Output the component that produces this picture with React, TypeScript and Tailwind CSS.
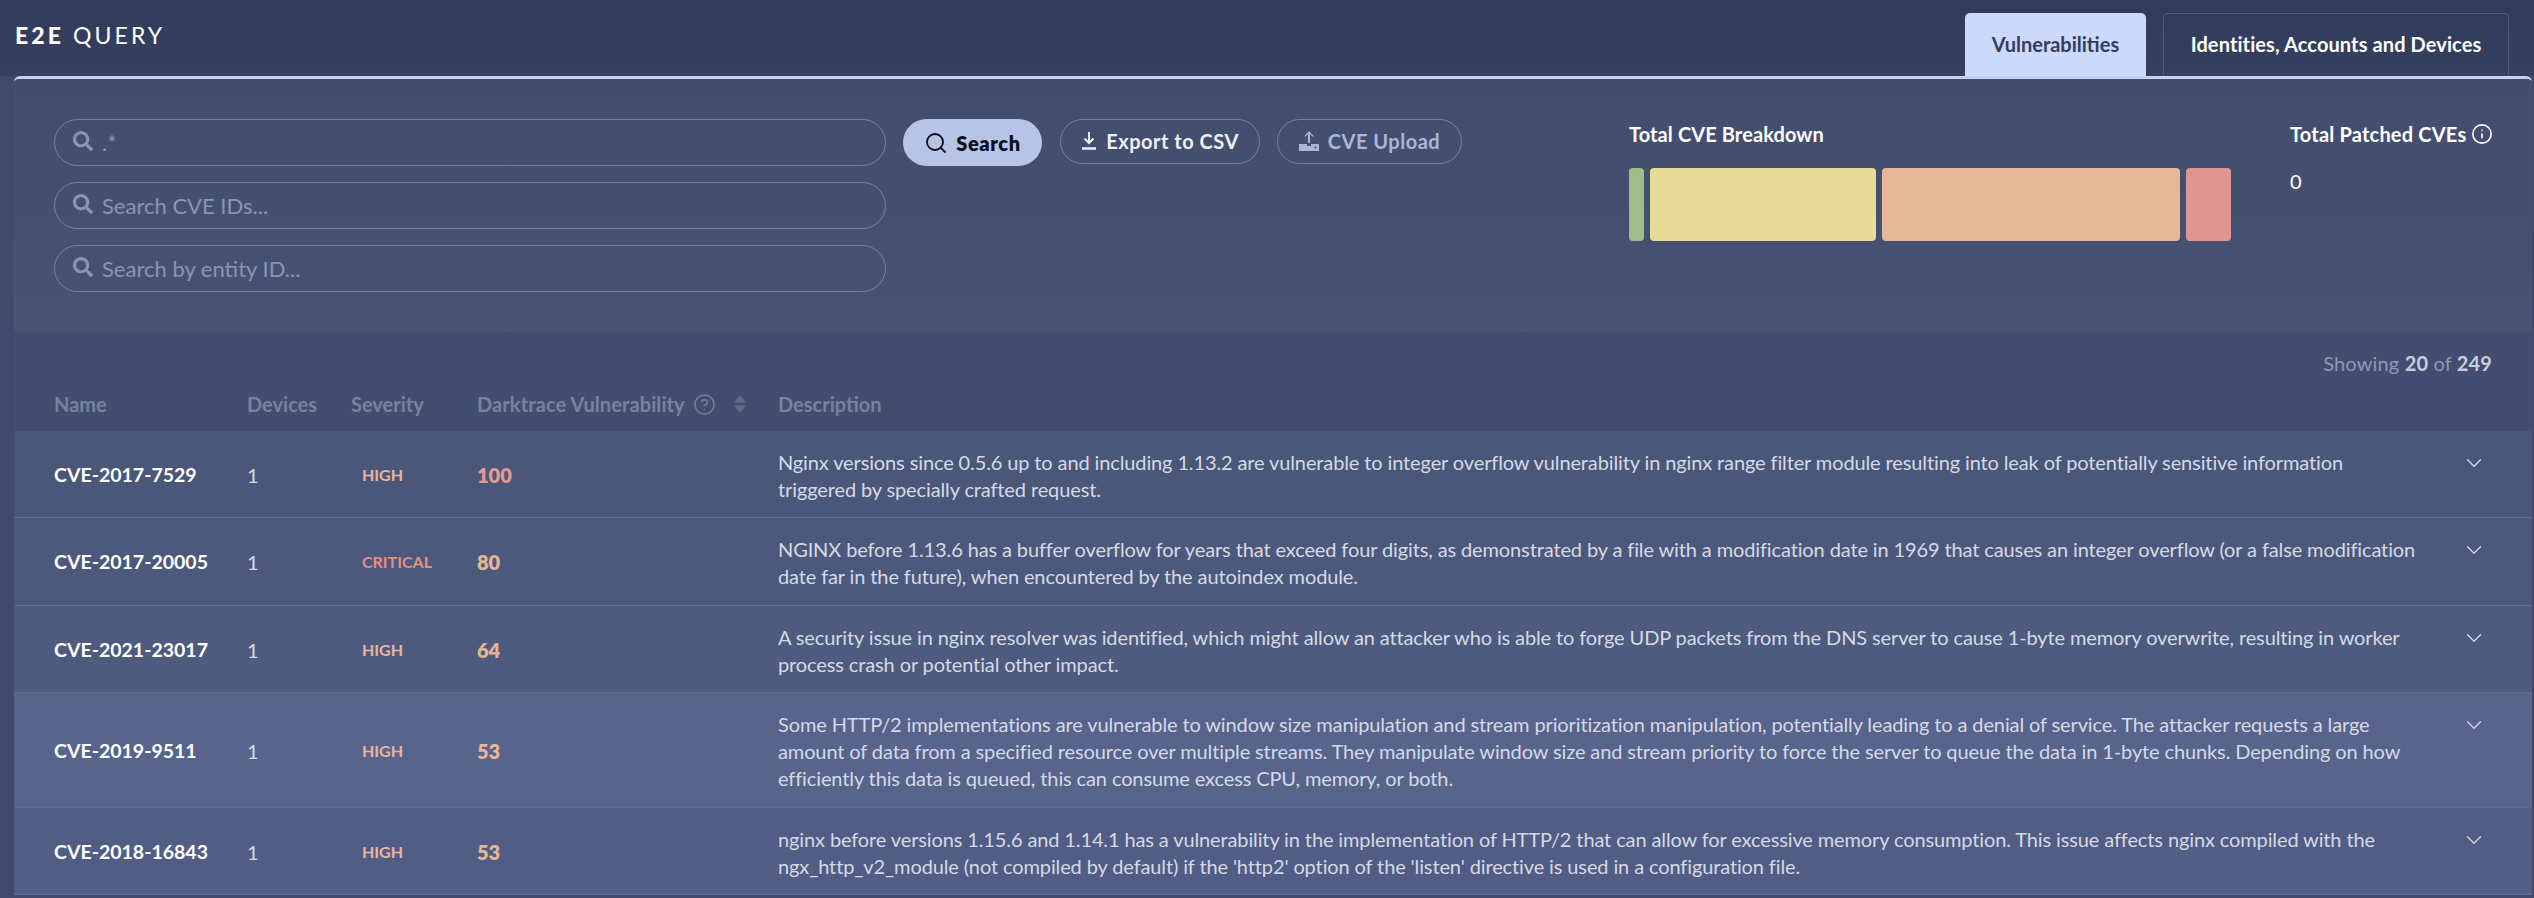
import React from "react";
import { Search, ChevronDown, CircleHelp, Info } from "lucide-react";
import { FaSearch } from "react-icons/fa";

const rows = [
  { id: "CVE-2017-7529", sev: "HIGH", score: "100", scoreCls: "text-[#e39a90]", lines: ["Nginx versions since 0.5.6 up to and including 1.13.2 are vulnerable to integer overflow vulnerability in nginx range filter module resulting into leak of potentially sensitive information", "triggered by specially crafted request."], h: "h-[87px]", bg: "bg-[#4b5779]" },
  { id: "CVE-2017-20005", sev: "CRITICAL", score: "80", scoreCls: "text-[#e5b595]", lines: ["NGINX before 1.13.6 has a buffer overflow for years that exceed four digits, as demonstrated by a file with a modification date in 1969 that causes an integer overflow (or a false modification", "date far in the future), when encountered by the autoindex module."], h: "h-[88px]", bg: "bg-[#4d597c]" },
  { id: "CVE-2021-23017", sev: "HIGH", score: "64", scoreCls: "text-[#e5b595]", lines: ["A security issue in nginx resolver was identified, which might allow an attacker who is able to forge UDP packets from the DNS server to cause 1-byte memory overwrite, resulting in worker", "process crash or potential other impact."], h: "h-[87px]", bg: "bg-[#4f5b7e]" },
  { id: "CVE-2019-9511", sev: "HIGH", score: "53", scoreCls: "text-[#e5b595]", lines: ["Some HTTP/2 implementations are vulnerable to window size manipulation and stream prioritization manipulation, potentially leading to a denial of service. The attacker requests a large", "amount of data from a specified resource over multiple streams. They manipulate window size and stream priority to force the server to queue the data in 1-byte chunks. Depending on how", "efficiently this data is queued, this can consume excess CPU, memory, or both."], h: "h-[115px]", bg: "bg-[#58648c]" },
  { id: "CVE-2018-16843", sev: "HIGH", score: "53", scoreCls: "text-[#e5b595]", lines: ["nginx before versions 1.15.6 and 1.14.1 has a vulnerability in the implementation of HTTP/2 that can allow for excessive memory consumption. This issue affects nginx compiled with the", "ngx_http_v2_module (not compiled by default) if the 'http2' option of the 'listen' directive is used in a configuration file."], h: "h-[87px]", bg: "bg-[#515d84]" },
];

function SearchField({ placeholder, value }: { placeholder?: string; value?: string }) {
  return (
    <div className="flex h-[47px] w-[832px] items-center gap-[9px] rounded-full border border-[#75809f] pl-[18px]">
      <FaSearch size={20} className="text-[#8a94b1] shrink-0 -mt-[3px]" />
      <span className="text-[22px] text-[#8a94b1]">{value ?? placeholder}</span>
    </div>
  );
}

export default function App() {
  return (
    <div className="h-screen overflow-hidden bg-[#404a6c] font-['Lato',sans-serif] flex flex-col">
      <header className="flex h-[76px] shrink-0 bg-gradient-to-b from-[#323c5a] to-[#353f5e] pl-[15px] pr-[25px]">
        <div className="mt-[21px] text-[23px] leading-[28px] tracking-[0.135em] text-white">
          <span className="font-black">E2E</span> <span className="font-normal">QUERY</span>
        </div>
        <div className="ml-auto mt-[13px] flex gap-[17px]">
          <div className="flex w-[181px] justify-center rounded-t-[5px] bg-[#cdd9fa] pt-[15px] text-[20px] font-bold leading-[32px] text-[#333d5c]">Vulnerabilities</div>
          <div className="flex w-[346px] justify-center rounded-t-[5px] border border-b-0 border-[#4f5a7a] pt-[14px] text-[20px] font-bold leading-[32px] tracking-[0.1px] text-white">Identities, Accounts and Devices</div>
        </div>
      </header>

      <main className="ml-[14px] mr-[2px] flex flex-1 flex-col overflow-hidden rounded-t-[6px] border-t-[3px] border-[#c5d1f4]">
        <section className="flex h-[253px] shrink-0 bg-gradient-to-b from-[#434e6e] to-[#475274] pl-[40px] pt-[40px]">
          <div className="flex flex-col gap-[16px]">
            <SearchField value=".*" />
            <SearchField placeholder="Search CVE IDs..." />
            <SearchField placeholder="Search by entity ID..." />
          </div>
          <div className="ml-[17px] flex h-[47px] w-[139px] items-center justify-center gap-[8px] rounded-full bg-[#b8c4e6] text-[20px] font-extrabold tracking-[0.6px] text-[#0b0f1c]">
            <Search size={24} strokeWidth={1.8} />
            Search
          </div>
          <div className="ml-[18px] flex h-[45px] w-[200px] items-center justify-center gap-[9px] rounded-full border border-[#75809f] pb-[2px] text-[20px] font-bold tracking-[0.5px] text-[#eeeff3]">
            <svg width="16" height="20" viewBox="0 0 16 20" fill="none" stroke="currentColor" strokeWidth="2"><path d="M8 1v11M3.500 7.500L8 12l4.500-4.500" /><path d="M1 17.500h14" strokeWidth="2.400" /></svg>
            Export to CSV
          </div>
          <div className="ml-[17px] flex h-[45px] w-[185px] items-center justify-center gap-[9px] rounded-full border border-[#75809f] pb-[2px] text-[20px] font-bold tracking-[0.5px] text-[#aab6d8]">
            <svg width="20" height="22" viewBox="0 0 20 22" fill="currentColor"><path d="M10 1L5 6.500h1.600L9 4v9h2V4l2.400 2.500H15z" /><path d="M0 14h8v2h4v-2h8v7H0z" /><circle cx="16.500" cy="17.500" r="1" fill="#475274" /></svg>
            CVE Upload
          </div>
          <div className="ml-[167px] flex w-[602px] flex-col">
            <div className="mt-[3px] text-[20px] font-bold leading-[24px] tracking-[0.1px] text-white">Total CVE Breakdown</div>
            <div className="mt-[22px] flex h-[73px] gap-[6px]">
              <div className="w-[15px] rounded-[4px] bg-[#9fbd88]" />
              <div className="w-[226px] rounded-[4px] bg-[#e6dc98]" />
              <div className="w-[299px] rounded-[4px] bg-[#e4b796]" />
              <div className="w-[45px] rounded-[4px] bg-[#e09595]" />
            </div>
          </div>
          <div className="ml-[59px] flex flex-col">
            <div className="mt-[3px] flex items-center gap-[5px] text-[20px] font-bold leading-[24px] tracking-[0.2px] text-white">
              Total Patched CVEs
              <Info size={22} strokeWidth={1.8} />
            </div>
            <div className="mt-[23px] text-[20px] leading-[24px] text-white">0</div>
          </div>
        </section>

        <div className="flex h-[99px] shrink-0 flex-col bg-[#434d70] pl-[40px] pr-[40px]">
          <div className="mt-[20px] self-end text-[20px] leading-[22px] tracking-[0.15px] text-[#8f98b4]">
            Showing <b className="text-[#c9cede]">20</b> of <b className="text-[#c9cede]">249</b>
          </div>
          <div className="mt-[18px] flex items-center text-[20px] font-bold leading-[24px] text-[#78829f]">
            <div className="w-[193px]">Name</div>
            <div className="w-[104px]">Devices</div>
            <div className="w-[126px]">Severity</div>
            <div className="flex w-[301px] items-center tracking-[0.1px]">
              Darktrace Vulnerability
              <CircleHelp size={23} strokeWidth={1.5} className="ml-[8px]" />
              <svg width="14" height="20" viewBox="0 0 14 20" className="ml-[17px]" fill="#5f6a8a"><path d="M7 1l6 7.500H1z" /><path d="M7 19l6-7.500H1z" /></svg>
            </div>
            <div>Description</div>
          </div>
        </div>

        {rows.map((r) => (
          <div key={r.id} className={`flex ${r.h} shrink-0 border-b border-[#5f6b8f] pl-[40px] ${r.bg}`}>
            <div className="flex w-[193px] items-center pt-[1px] text-[19.500px] font-bold text-white">{r.id}</div>
            <div className="flex w-[104px] items-center pt-[1px] text-[20px] text-[#d5d9e6]">1</div>
            <div className={`flex w-[126px] items-center pl-[11px] pt-[1px] text-[16px] font-bold ${r.sev === "CRITICAL" ? "text-[#e58f86]" : "text-[#eab59a]"}`}>{r.sev}</div>
            <div className={`flex w-[301px] items-center pt-[1px] text-[20px] font-extrabold ${r.scoreCls}`}>{r.score}</div>
            <div className="flex flex-1 items-center pt-[3px] text-[20px] leading-[27px] tracking-[-0.12px] text-[#d5d9e6]">
              <div>
                {r.lines.map((l) => (
                  <div key={l} className="whitespace-nowrap">{l}</div>
                ))}
              </div>
            </div>
            <div className="ml-auto mr-[45px] pt-[19px]">
              <ChevronDown size={26} strokeWidth={1.2} className="text-[#d5d9e6]" />
            </div>
          </div>
        ))}
      </main>
    </div>
  );
}
